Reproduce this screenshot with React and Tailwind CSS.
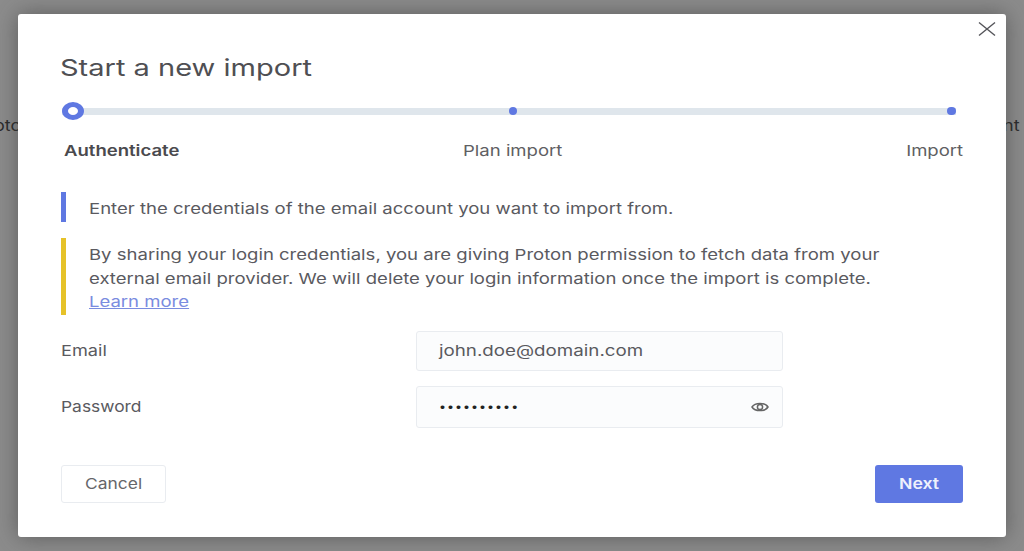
import React from "react";

const L = "inline-block origin-left scale-x-[1.235] whitespace-nowrap";

export default function App() {
  return (
    <div className="relative h-[551px] w-[1024px] overflow-hidden bg-[#8c8c8c] pl-[18px] pt-[14px] font-['Inter','Liberation_Sans',sans-serif] text-[#5a5a5f]">
      <span className="absolute left-[-6px] top-[115px] origin-left scale-x-[1.2] whitespace-nowrap text-[15px] text-[#2a2a2a]">otc</span>
      <span className="absolute left-[1003px] top-[115px] origin-left scale-x-[1.2] whitespace-nowrap text-[15px] text-[#2a2a2a]">nt t</span>
      <div className="relative flex h-[523px] w-[988px] flex-col rounded-[3px] bg-white px-[43px] pt-[33px] shadow-[0_0_22px_rgba(60,60,60,0.6)]">
        <button className="absolute right-[9px] top-[7px] text-[#55555a]" aria-label="Close">
          <svg width="20" height="16" viewBox="0 0 20 16" fill="none" stroke="currentColor" strokeWidth="1.4">
            <path d="M2 1.5 L18 14.5 M18 1.5 L2 14.5" />
          </svg>
        </button>

        <h1 className="-ml-[1px] h-[40px] text-[23.5px] leading-[42px] text-[#4f4f53]"><span className={L}>Start a new import</span></h1>

        <div className="relative mt-[15px] flex h-[18px] items-center pl-[1px] pr-[7px]">
          <div className="h-[7px] flex-1 bg-[#dfe6ec]" />
          <div className="absolute left-[1px] top-0 h-[18px] w-[22px] rounded-[50%] border-x-[6px] border-y-[5px] border-[#5f78e2] bg-white" />
          <div className="absolute left-[448px] top-[5px] h-[8px] w-[8px] rounded-full bg-[#5f78e2]" />
          <div className="absolute right-[7px] top-[5px] h-[8px] w-[9px] rounded-full bg-[#5f78e2]" />
        </div>

        <div className="mt-[21px] flex h-[20px] items-center justify-between text-[15px]">
          <span className={`${L} ml-[3px] font-semibold text-[#4a4a4e]`}>Authenticate</span>
          <span className={`${L} mr-[68px] text-[#5f5f63]`}>Plan import</span>
          <span className={`${L} origin-right! text-[#5f5f63]`}>Import</span>
        </div>

        <div className="mt-[31px] flex h-[30px] items-center border-l-[5px] border-[#5f78e2] pl-[23px] pt-[4px] text-[15px]">
          <span className={L}>Enter the credentials of the email account you want to import from.</span>
        </div>

        <div className="mt-[16px] h-[77px] border-l-[5px] border-[#e6c229] pl-[23px] pt-[5px] text-[15px] leading-[23.5px]">
          <p className="origin-left scale-x-[1.235] whitespace-nowrap">By sharing your login credentials, you are giving Proton permission to fetch data from your</p>
          <p className="origin-left scale-x-[1.235] whitespace-nowrap">external email provider. We will delete your login information once the import is complete.</p>
          <a className={`${L} text-[#7a8ce0] underline`} href="#">Learn more</a>
        </div>

        <div className="mt-[16px] flex h-[40px] items-center">
          <label className="w-[355px] pt-[1px] text-[15px]"><span className="inline-block origin-left scale-x-[1.21] whitespace-nowrap">Email</span></label>
          <div className="flex h-[40px] w-[367px] items-center rounded-[3px] border border-[#e9ecf0] bg-[#fbfcfd] px-[22px] pt-[1px] text-[15px]">
            <span className="inline-block origin-left scale-x-[1.25] whitespace-nowrap">john.doe@domain.com</span>
          </div>
        </div>

        <div className="mt-[15px] flex h-[42px] items-center">
          <label className="w-[355px] text-[15px]"><span className="inline-block origin-left scale-x-[1.16] whitespace-nowrap">Password</span></label>
          <div className="flex h-[42px] w-[367px] items-center justify-between rounded-[3px] border border-[#e9ecf0] bg-[#fbfcfd] pl-[22px] pr-[12px]">
            <span className={`${L} font-['Open_Sans',sans-serif] text-[15px] tracking-[0.85px] text-[#222]`}>••••••••••</span>
            <svg width="20" height="14" viewBox="0 0 20 14" fill="none" stroke="#666" strokeWidth="1.5">
              <path d="M2 7 C5 2.2 15 2.2 18 7 C15 11.8 5 11.8 2 7 Z" />
              <circle cx="10" cy="7" r="2.6" />
            </svg>
          </div>
        </div>

        <div className="mt-[37px] flex items-center justify-between">
          <button className="h-[38px] w-[105px] rounded-[3px] border border-[#e9ecf0] bg-white pt-[1px] text-[15px] text-[#66666a]"><span className="inline-block scale-x-[1.16]">Cancel</span></button>
          <button className="h-[38px] w-[88px] rounded-[3px] bg-[#5f78e2] pt-[1px] text-[15px] font-semibold text-[#eef1fc]"><span className="inline-block scale-x-[1.18]">Next</span></button>
        </div>
      </div>
    </div>
  );
}
